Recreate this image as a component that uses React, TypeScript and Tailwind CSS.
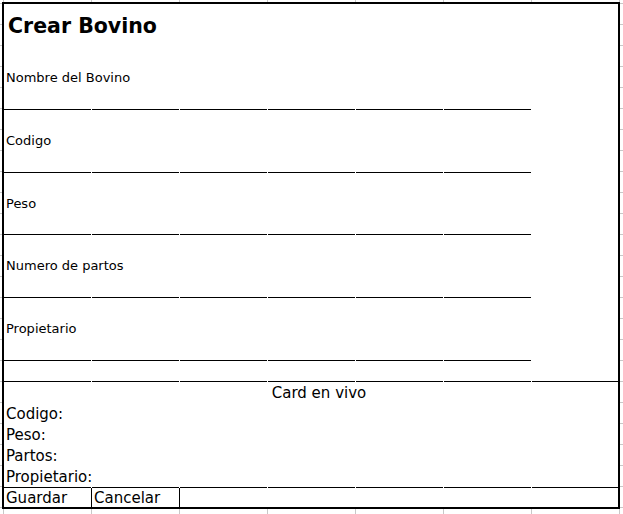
import React from "react";

const font = { fontFamily: '"DejaVu Sans", Verdana, sans-serif' };

const campos = ["Nombre del Bovino", "Codigo", "Peso", "Numero de partos", "Propietario"];
const tarjeta = ["Codigo:", "Peso:", "Partos:", "Propietario:"];

// a cell border row: pieces with 1px white gaps where the sheet gridlines sit
const Linea = ({ full }: { full?: boolean }) => (
  <div className="flex h-px gap-px">
    {[0, 1, 2, 3, 4, 5].map((i) => (
      <div key={i} className="h-px w-[87px] bg-black" />
    ))}
    {full && <div className="h-px flex-1 bg-black" />}
  </div>
);

const Campo = ({ label }: { label: string }) => (
  <div className="flex h-[63px] flex-col">
    <div className="mt-[20px] h-[21px] pl-[2px] text-[13px] leading-[21px]">{label}</div>
    <div className="mt-auto">
      <Linea />
    </div>
  </div>
);

export default function App() {
  return (
    <div
      className="h-[514px] w-full overflow-hidden bg-white bg-[linear-gradient(to_right,#c8c8c8_1px,transparent_1px),linear-gradient(to_bottom,#c8c8c8_1px,transparent_1px)] bg-size-[88px_21px] bg-position-[3px_3px] pl-[2px] pt-[2px] text-black"
      style={font}
    >
      <div className="flex h-[507px] w-[618px] flex-col border-2 border-black bg-white">
        <div className="h-[43px] pl-[4px] pt-[10px] text-[20.5px] font-bold leading-[24px]">Crear Bovino</div>

        {campos.map((c) => (
          <Campo key={c} label={c} />
        ))}

        <div className="flex h-[21px] flex-col justify-end">
          <Linea full />
        </div>

        <div className="text-[15px] leading-[23px]">
          <div className="h-[21px] pl-[16px] text-center">Card en vivo</div>
          {tarjeta.map((t) => (
            <div key={t} className="h-[21px] pl-[2px]">
              {t}
            </div>
          ))}
        </div>
        <Linea full />

        <div className="flex h-[19px] text-[15px] leading-[21px]">
          <div className="w-[88px] border-r border-black pl-[2px]">Guardar</div>
          <div className="w-[88px] border-r border-black pl-[2px]">Cancelar</div>
          <div className="flex-1" />
        </div>
      </div>
    </div>
  );
}
